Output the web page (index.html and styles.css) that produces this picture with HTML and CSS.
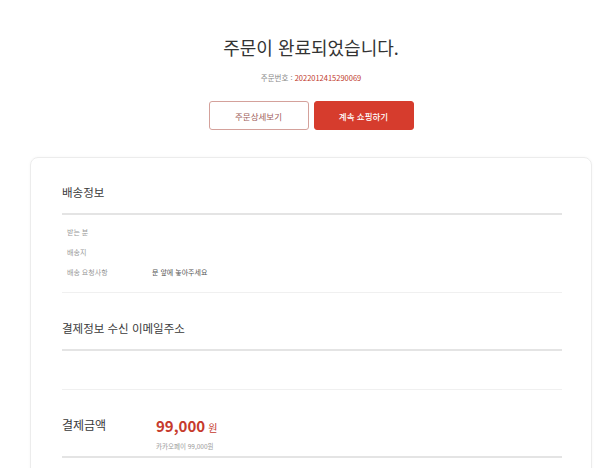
FILE: index.html
```html
<!DOCTYPE html>
<html lang="ko">
<head>
    <meta charset="UTF-8">
    <meta name="viewport" content="width=device-width, initial-scale=1.0">
    <title>주문 완료</title>
    <link rel="stylesheet" href="styles.css">
</head>
<body>
    <div class="page">
        <div class="complete-header">
            <h1>주문이 완료되었습니다.</h1>
            <p class="order-no">주문번호 : <span>2022012415290069</span></p>
            <div class="actions">
                <button class="btn btn-outline">주문상세보기</button>
                <button class="btn btn-fill">계속 쇼핑하기</button>
            </div>
        </div>

        <div class="card">
            <div class="section">
                <h2 class="section-title">배송정보</h2>
                <ul class="info-list">
                    <li><span class="info-label">받는 분</span><span class="info-value"></span></li>
                    <li><span class="info-label">배송지</span><span class="info-value"></span></li>
                    <li><span class="info-label">배송 요청사항</span><span class="info-value">문 앞에 놓아주세요</span></li>
                </ul>
            </div>

            <div class="section">
                <h2 class="section-title">결제정보 수신 이메일주소</h2>
                <div class="email-box"></div>
            </div>

            <div class="payment">
                <div class="payment-label">결제금액</div>
                <div class="payment-detail">
                    <div class="amount"><strong>99,000</strong><span>원</span></div>
                    <div class="method">카카오페이 99,000원</div>
                </div>
            </div>
        </div>
    </div>
</body>
</html>
```

FILE: styles.css
```css
:root {
    --color-red: #d63c2d;
    --color-text: #333;
    --color-gray: #999;
    --line-strong: #e4e4e4;
    --line-light: #f0f0f0;
}

* {
    box-sizing: border-box;
}

body {
    font-family: "Noto Sans CJK KR", "Noto Sans", sans-serif;
    margin: 0;
    background: #fff;
    color: var(--color-text);
}

.page {
    width: 562px;
    margin-left: 30px;
}

.complete-header {
    padding-top: 36px;
    text-align: center;
}

h1 {
    margin: 0;
    font-size: 18px;
    line-height: 22px;
    font-weight: 400;
    color: #333;
}

.order-no {
    margin: 15px 0 0;
    font-size: 7.5px;
    line-height: 10px;
    color: #888;
}

.order-no span {
    color: #c0392b;
}

.actions {
    display: flex;
    justify-content: center;
    gap: 5px;
    margin-top: 18px;
}

.btn {
    width: 100px;
    height: 29px;
    border-radius: 3px;
    font-family: inherit;
    font-size: 8.5px;
    cursor: pointer;
}

.btn-outline {
    background: #fff;
    border: 1px solid #d4a19b;
    color: #a0605a;
}

.btn-fill {
    background: var(--color-red);
    border: 1px solid var(--color-red);
    color: #fff;
    font-weight: 500;
}

.card {
    margin-top: 27px;
    padding: 26px 29px 40px 31px;
    border: 1px solid #ececec;
    border-radius: 8px;
    box-shadow: 0 0 3px rgba(0, 0, 0, 0.04);
}

.section-title {
    margin: 0;
    padding-bottom: 13px;
    font-size: 11.5px;
    line-height: 16px;
    font-weight: 400;
    color: #3a3a3a;
    border-bottom: 2px solid var(--line-strong);
}

.section + .section {
    padding-top: 27px;
}

.info-list {
    list-style: none;
    margin: 0;
    padding: 7px 0 10px;
    border-bottom: 1px solid var(--line-light);
}

.info-list li {
    display: flex;
    align-items: center;
    height: 20px;
    padding-left: 5px;
    font-size: 7px;
}

.info-label {
    width: 85px;
    color: var(--color-gray);
}

.info-value {
    color: #555;
}

.email-box {
    height: 39px;
    border-bottom: 1px solid var(--line-light);
}

.payment {
    display: flex;
    padding: 25px 0 5px;
    border-bottom: 2px solid var(--line-strong);
}

.payment-label {
    width: 94px;
    font-size: 12px;
    line-height: 20px;
    color: #3a3a3a;
}

.amount {
    line-height: 20px;
    color: #c63a2c;
}

.amount strong {
    font-size: 15px;
    font-weight: 700;
}

.amount span {
    margin-left: 3px;
    font-size: 10px;
}

.method {
    margin-top: 3px;
    font-size: 6.5px;
    line-height: 10px;
    color: var(--color-gray);
}
```
